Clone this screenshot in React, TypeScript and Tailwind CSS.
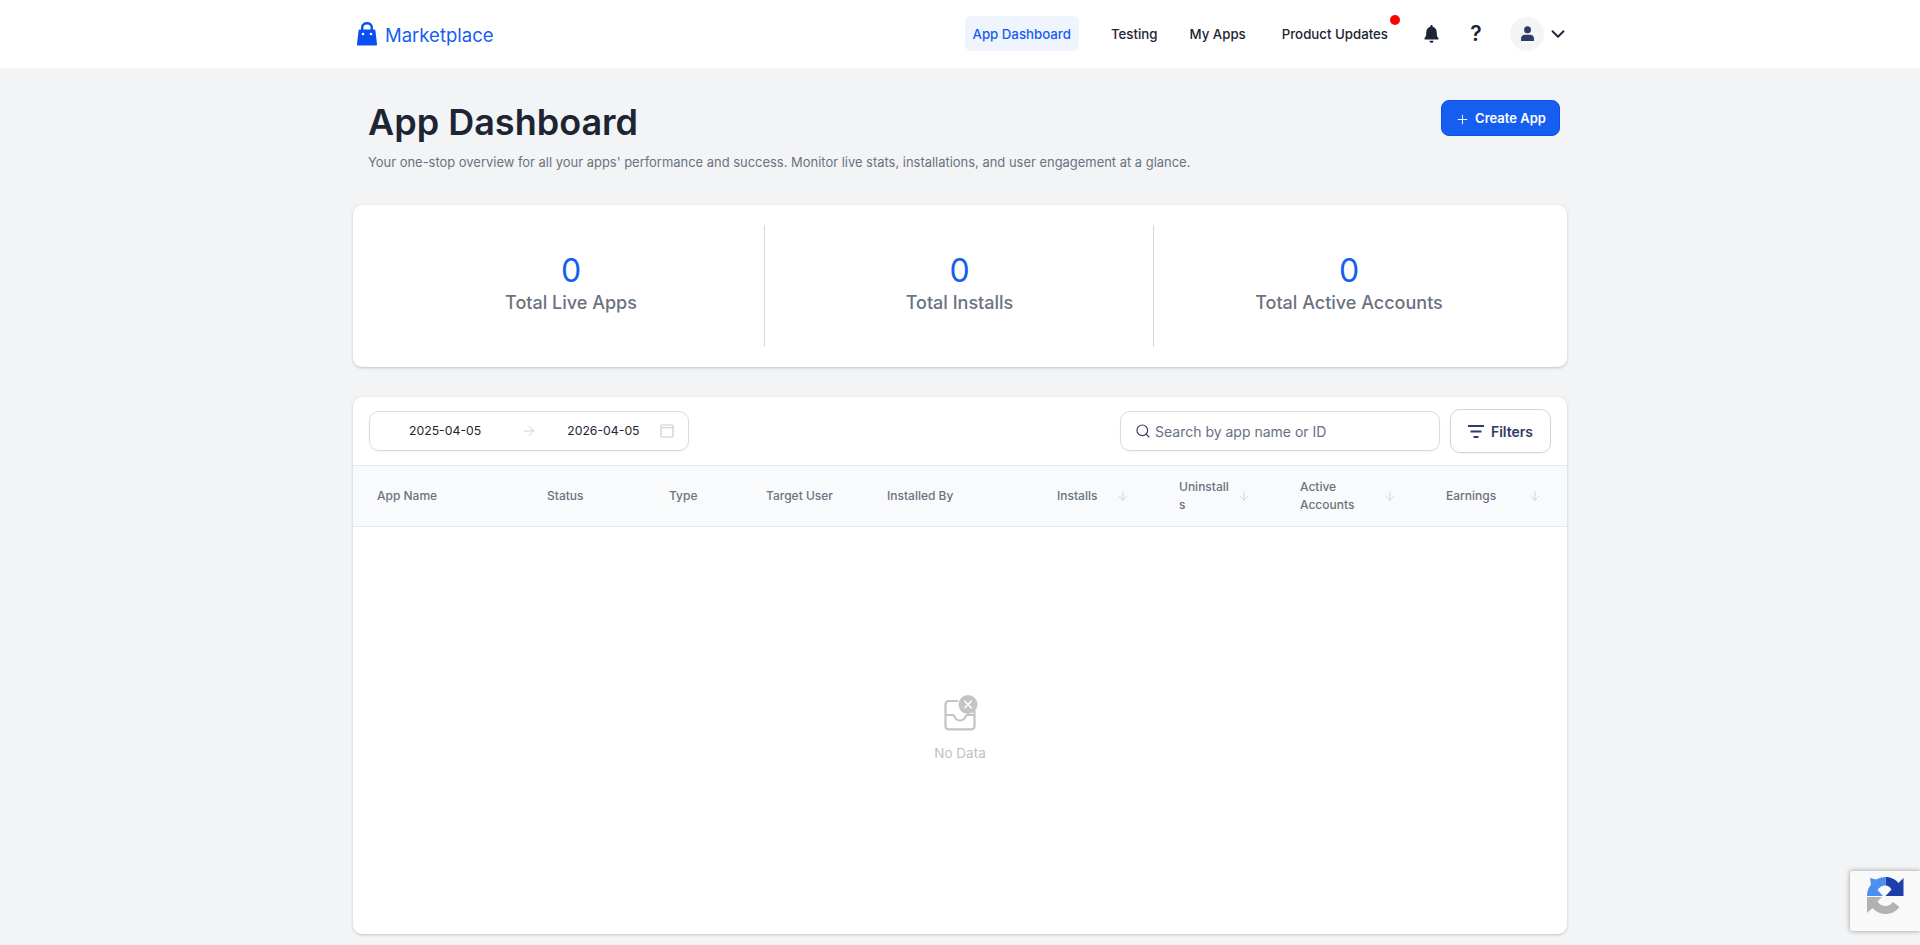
import { Search, ArrowDown, ArrowRight, Plus, ChevronDown } from "lucide-react";

const font = { fontFamily: "Inter, 'Noto Sans', sans-serif" };

function BagIcon() {
  return (
    <svg width="20" height="24" viewBox="0 0 20 24" fill="none">
      <path d="M5.200 9V5.500C5.200 2.800 7.300 1.200 10 1.200s4.800 1.600 4.800 4.300V9" stroke="#0a4ff0" strokeWidth="2.400" />
      <path d="M2.600 7.500h14.800c.5 0 .9.4 1 .9L20 22c.1.9-.5 1.600-1.400 1.600H1.400C.5 23.600-.1 22.900 0 22L1.600 8.400c.1-.5.5-.9 1-.9Z" fill="#0a4ff0" />
      <circle cx="6" cy="12" r="1.300" fill="#fff" />
      <circle cx="14" cy="12" r="1.300" fill="#fff" />
    </svg>
  );
}

function BellIcon() {
  return (
    <svg width="15" height="18" viewBox="0 0 18 20" fill="#1d2433" preserveAspectRatio="none">
      <path d="M9 0c.8 0 1.400.6 1.400 1.400v.6c3 .6 4.900 3.200 4.900 6.300 0 3.600.7 5.100 2.100 6.500.4.500.1 1.200-.6 1.200H1.200c-.7 0-1-.7-.6-1.200 1.400-1.400 2.100-2.900 2.100-6.500 0-3.100 1.900-5.700 4.900-6.300v-.6C7.600.6 8.200 0 9 0Z" />
      <path d="M6.600 17.400h4.800c0 1.400-1 2.400-2.400 2.400S6.600 18.800 6.600 17.400Z" />
    </svg>
  );
}

function UserIcon() {
  return (
    <svg width="13" height="15" viewBox="0 0 13 15" fill="#2f3b66">
      <circle cx="6.500" cy="3.700" r="3.500" />
      <path d="M0 15v-2.300C0 10.200 1.800 8.800 4 8.800h5c2.200 0 4 1.400 4 3.900V15Z" />
    </svg>
  );
}

function FilterIcon() {
  return (
    <svg width="16" height="13" viewBox="0 0 16 13" fill="#2f3b66">
      <rect x="0" y="0" width="16" height="2" rx="0.500" />
      <rect x="2.500" y="5.500" width="11" height="2" rx="0.500" />
      <rect x="5.500" y="11" width="5" height="2" rx="0.500" />
    </svg>
  );
}

function CalendarBox() {
  return (
    <svg width="14" height="14" viewBox="0 0 14 14" fill="none" stroke="#c9c9c9" strokeWidth="1.100">
      <rect x="1" y="1" width="12" height="12" rx="1" />
      <path d="M1 3.800h12" />
    </svg>
  );
}

function EmptyIcon() {
  return (
    <svg width="34" height="40" viewBox="0 0 34 40" fill="none">
      <path d="M14 6H5C2.800 6 1.500 7.400 1.500 9.500V31c0 2 1.300 3.300 3.300 3.300h22.400c2 0 3.300-1.300 3.300-3.300V16" stroke="#c4c4c4" strokeWidth="2.200" />
      <path d="M1.500 20h7c1 0 1.500.5 2 1.500.8 2.400 3 4 5.500 4s4.700-1.600 5.500-4c.5-1 1-1.500 2-1.500h7" stroke="#c4c4c4" strokeWidth="2.200" />
      <circle cx="24" cy="9.500" r="9.500" fill="#c4c4c4" />
      <path d="M20.300 5.800l7.400 7.400M27.700 5.800l-7.400 7.400" stroke="#fff" strokeWidth="1.600" />
    </svg>
  );
}

function RecaptchaIcon() {
  return (
    <svg width="37" height="37" viewBox="0 0 37 37">
      <path d="M18.500 0C24 0 28.500 2.500 31.500 6L36.500 1V19H18.500L24.500 12.500C23 10 21 8.500 18.500 8.500Z" fill="#1c3faa" />
      <path d="M0 19C0 14.500 1.500 10.500 4 7.500L3 1L9 2.500C12 1 15 0 18.500 0V8.500C15 8.500 12 10.500 10.500 13L16 19Z" fill="#4a90f0" />
      <path d="M0 20V36L5.500 31C9 35 13.500 37 18.500 37C24 37 29 34.500 32.500 30L26 25C24 27.500 21.500 29 18.500 29C15 29 12 27 10.500 24.500L15 20Z" fill="#b2b2b2" />
    </svg>
  );
}

type Col = { label: string; sort?: boolean; width: string; textClass?: string };

const cols: Col[] = [
  { label: "App Name", width: "w-[170px]" },
  { label: "Status", width: "w-[122px]" },
  { label: "Type", width: "w-[97px]" },
  { label: "Target User", width: "w-[121px]" },
  { label: "Installed By", width: "w-[170px]" },
  { label: "Installs", sort: true, width: "w-[122px]" },
  { label: "Uninstalls", sort: true, width: "w-[121px]", textClass: "w-[52px] break-all" },
  { label: "Active Accounts", sort: true, width: "w-[146px]", textClass: "w-[70px]" },
  { label: "Earnings", sort: true, width: "w-[145px]" },
];

function NavLink({ label, active, className }: { label: string; active?: boolean; className?: string }) {
  return (
    <a
      className={`flex h-[35px] items-center rounded-md px-2 pt-[2px] text-[13.25px] font-medium ${
        active ? "bg-[#eff4ff] text-[#155eef]" : "text-[#1d2433]"
      } ${className ?? ""}`}
    >
      {label}
    </a>
  );
}

function Stat({ label, className }: { label: string; className: string }) {
  return (
    <div className={`flex flex-col items-center justify-center pb-[4px] ${className}`}>
      <div className="text-[32px] font-normal leading-[38px] text-[#155eef]">0</div>
      <div className="text-[18px] font-medium leading-[26px] text-[#6b7280]">{label}</div>
    </div>
  );
}

export default function App() {
  return (
    <div className="flex h-screen flex-col overflow-hidden bg-[#f3f4f6]" style={font}>
      <header className="h-[68px] shrink-0 bg-white">
        <div className="mx-auto flex h-full w-[1214px] items-center justify-between pl-[4px]">
          <div className="flex items-center gap-[8px]">
            <BagIcon />
            <span className="pt-[3px] text-[18.500px] text-[#155eef]">Marketplace</span>
          </div>
          <nav className="mb-[1px] flex items-center">
            <NavLink label="App Dashboard" active />
            <NavLink label="Testing" className="ml-6" />
            <NavLink label="My Apps" className="ml-4" />
            <div className="relative ml-[20px]">
              <NavLink label="Product Updates" />
              <span className="absolute right-[-4px] top-[-1px] size-[10px] rounded-full bg-[#ff0000]" />
            </div>
            <span className="ml-[28px] flex">
              <BellIcon />
            </span>
            <span className="ml-[28px] w-[18px] text-center text-[21px] font-semibold leading-none text-[#1d2433]">?</span>
            <span className="ml-[25px] flex size-[34px] items-center justify-center rounded-full bg-[#f3f4f6]">
              <UserIcon />
            </span>
            <ChevronDown className="-mr-[2px] ml-[3px] text-[#1d2433]" size={22} strokeWidth={2} />
          </nav>
        </div>
      </header>

      <main className="mx-auto flex w-[1214px] flex-1 flex-col pb-[11px]">
        <div className="flex items-start justify-between pl-[15px] pr-[7px] pt-[32px]">
          <div>
            <h1 className="text-[36px] font-semibold leading-[44px] text-[#1d2433]">App Dashboard</h1>
            <p className="mt-[8px] text-[12.950px] leading-5 text-[#6b7280]">
              Your one-stop overview for all your apps' performance and success. Monitor live stats, installations, and user engagement at a glance.
            </p>
          </div>
          <button className="flex h-[36px] w-[119px] items-center justify-center gap-[5px] rounded-lg border border-[#0a4ff0] bg-[#155eef] pt-[2px] text-[13px] font-semibold text-white">
            <Plus size={15} strokeWidth={1.5} />
            Create App
          </button>
        </div>

        <section className="mt-[33px] grid h-[162px] shrink-0 grid-cols-[392px_389px_1fr] rounded-[9px] bg-white p-5 shadow-[0_1px_3px_rgba(16,24,40,0.22)]">
          <Stat label="Total Live Apps" className="border-r border-[#d9d9d9] pl-[5px]" />
          <Stat label="Total Installs" className="border-r border-[#d9d9d9] pl-[1px]" />
          <Stat label="Total Active Accounts" className="pr-[3px]" />
        </section>

        <section className="mt-[30px] flex min-h-0 flex-1 flex-col overflow-hidden rounded-[9px] bg-white shadow-[0_1px_3px_rgba(16,24,40,0.22)]">
          <div className="flex h-[68px] shrink-0 items-center justify-between pl-4 pr-4">
            <div className="flex h-10 w-[320px] items-center rounded-[10px] border border-[#d9dbe3] pl-[39px] pr-[14px] text-[12.250px] text-[#1d2433] shadow-[0_1px_2px_rgba(16,24,40,0.05)]">
              <span>2025-04-05</span>
              <ArrowRight className="ml-[40px] text-[#c4c4c4]" size={16} strokeWidth={1.1} />
              <span className="ml-[30px]">2026-04-05</span>
              <span className="ml-auto flex">
                <CalendarBox />
              </span>
            </div>
            <div className="flex items-center gap-[10px]">
              <div className="flex h-10 w-[320px] items-center gap-[4px] rounded-[10px] border border-[#d9dbe3] pl-[14px] text-[14px] text-[#667085] shadow-[0_1px_2px_rgba(16,24,40,0.05)]">
                <Search className="text-[#2f3b66]" size={16} strokeWidth={1.75} />
                Search by app name or ID
              </div>
              <button className="flex h-11 w-[101px] items-center justify-center gap-[7px] rounded-[10px] border border-[#d0d5dd] text-[14px] font-semibold text-[#2f3b66] shadow-[0_1px_2px_rgba(16,24,40,0.05)]">
                <FilterIcon />
                Filters
              </button>
            </div>
          </div>

          <table className="w-full flex-1 table-fixed border-t border-[#e4e7ec]">
            <thead>
              <tr className="h-[61px] border-b border-[#e4e7ec] bg-[#f9fafb]">
                {cols.map((c) => (
                  <th key={c.label} className={`${c.width} pl-6 pr-[25px] text-left text-[12px] font-medium leading-[18px] text-[#6b7280]`}>
                    <div className="flex items-center justify-between">
                      <span className={c.textClass}>{c.label}</span>
                      {c.sort && <ArrowDown className="shrink-0 text-[#c4c4c4]" size={14} strokeWidth={1.1} />}
                    </div>
                  </th>
                ))}
              </tr>
            </thead>
            <tbody>
              <tr>
                <td colSpan={9} className="pb-[2px]">
                  <div className="flex flex-col items-center">
                    <span className="ml-[2px] flex">
                      <EmptyIcon />
                    </span>
                    <div className="mt-[7px] text-[13.500px] leading-[22px] text-[#bfbfbf]">No Data</div>
                  </div>
                </td>
              </tr>
            </tbody>
          </table>
        </section>
      </main>

      <div className="fixed bottom-[14px] right-0 flex h-[60px] w-[70px] items-start rounded-l-[3px] bg-[#f9f9f9] pl-[17px] pt-[6px] shadow-[0_0_5px_rgba(128,128,128,0.8)]">
        <RecaptchaIcon />
      </div>
    </div>
  );
}
